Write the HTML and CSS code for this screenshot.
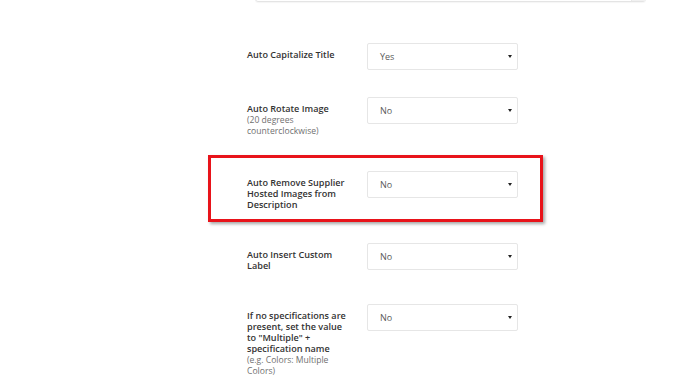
FILE: index.html
```html
<!DOCTYPE html>
<html>
<head>
<meta charset="utf-8">
<link rel="stylesheet" href="styles.css">
</head>
<body>
<div class="top-field"><span class="top-addon"></span></div>
<div class="form">
  <div class="row row-1">
    <div class="label"><div class="title">Auto Capitalize Title</div></div>
    <div class="select"><span>Yes</span><i class="caret"></i></div>
  </div>
  <div class="row row-2">
    <div class="label"><div class="title">Auto Rotate Image</div><div class="sub">(20 degrees counterclockwise)</div></div>
    <div class="select"><span>No</span><i class="caret"></i></div>
  </div>
  <div class="highlight">
    <div class="row">
      <div class="label"><div class="title">Auto Remove Supplier Hosted Images from Description</div></div>
      <div class="select"><span>No</span><i class="caret"></i></div>
    </div>
  </div>
  <div class="row row-4">
    <div class="label"><div class="title">Auto Insert Custom Label</div></div>
    <div class="select"><span>No</span><i class="caret"></i></div>
  </div>
  <div class="row">
    <div class="label"><div class="title">If no specifications are present, set the value to "Multiple" + specification name</div><div class="sub">(e.g. Colors: Multiple Colors)</div></div>
    <div class="select"><span>No</span><i class="caret"></i></div>
  </div>
</div>
</body>
</html>
```
FILE: styles.css
```css
html, body {
  margin: 0;
  padding: 0;
  background: #fff;
  overflow: hidden;
}
body {
  font-family: "Open Sans", "DejaVu Sans", sans-serif;
  width: 685px;
  height: 391px;
}
.top-field {
  margin-left: 255px;
  width: 389px;
  height: 28px;
  margin-top: -28px;
  border: 1px solid #e4e4e4;
  border-radius: 3px;
  display: flex;
  justify-content: flex-end;
  box-shadow: 0 1px 1px rgba(0,0,0,0.04);
}
.top-addon {
  width: 13px;
  background: #f1f1f1;
  border-left: 1px solid #e8e8e8;
}
.form {
  padding-top: 41px;
  padding-left: 247px;
}
.row {
  display: flex;
  align-items: flex-start;
}
.row-1 { margin-bottom: 27px; }
.row-2 { margin-bottom: 18px; }
.row-4 { margin-bottom: 33px; }
.label {
  width: 106px;
  margin-right: 14px;
  padding-top: 6px;
  line-height: 11px;
}
.title {
  font-size: 9.1px;
  font-weight: 600;
  color: #333;
}
.sub {
  margin-top: 1px;
  font-size: 8.6px;
  color: #707070;
}
.select {
  box-sizing: border-box;
  width: 151px;
  height: 27px;
  border: 1px solid #e6e6e6;
  border-radius: 2px;
  display: flex;
  align-items: center;
  justify-content: space-between;
  padding: 0 5px 0 12px;
  font-size: 9px;
  color: #5a5a5a;
  background: #fff;
}
.caret {
  width: 0;
  height: 0;
  border-left: 2px solid transparent;
  border-right: 2px solid transparent;
  border-top: 3px solid #222;
}
.highlight {
  margin-left: -39px;
  width: 271px;
  border: 3px solid #e8131a;
  padding: 13px 22px 9px 36px;
  box-shadow: 2px 2px 3px rgba(0,0,0,0.35);
  margin-bottom: 21px;
}
```
